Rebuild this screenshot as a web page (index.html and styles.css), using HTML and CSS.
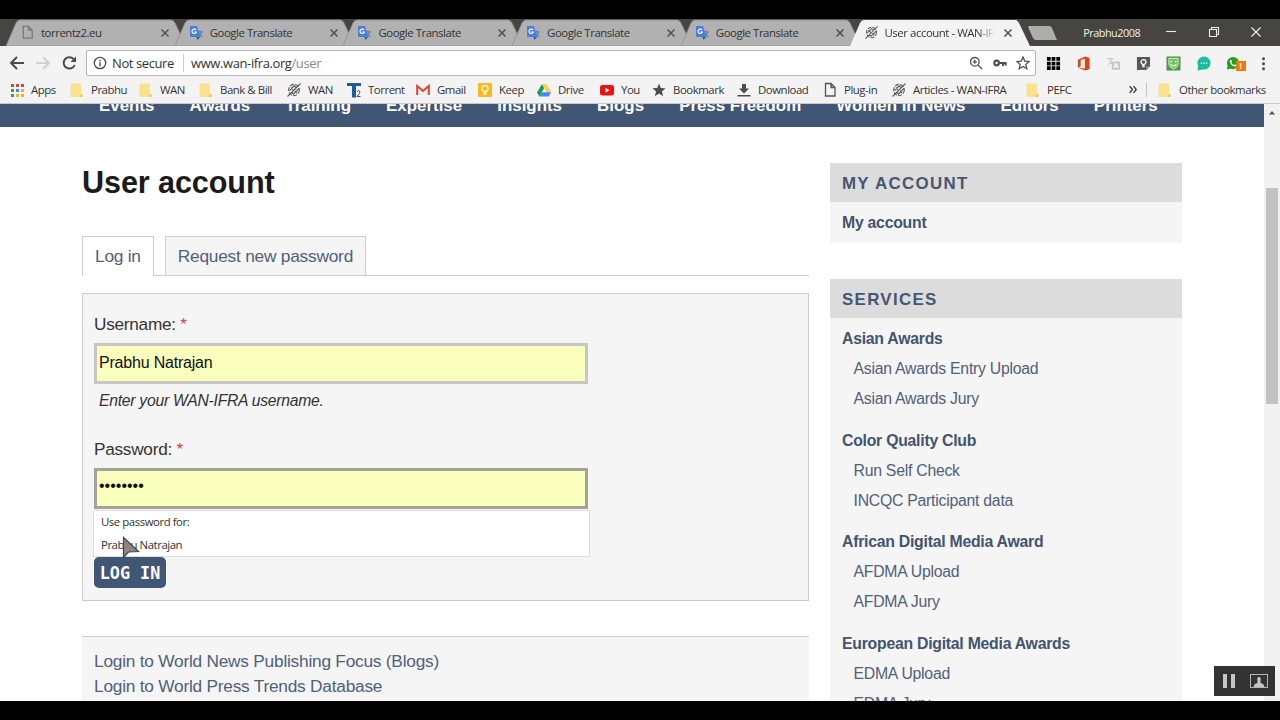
FILE: index.html
```html
<!DOCTYPE html>
<html lang="en">
<head>
  <meta charset="UTF-8" />
  <meta name="viewport" content="width=device-width, initial-scale=1.0"/>
  <title>User account - WAN-IFRA</title>
  <link rel="stylesheet" href="styles.css">
</head>
<body>
  <!-- shared icons -->
  <svg class="defs">
    <symbol id="tab-shape" viewBox="0 0 180 27"><path d="M0 27 L10 4 Q11.5 1 14 1 H165 Q167.500 1 169 4 L180 27 Z"/></symbol>
    <symbol id="i-doc" viewBox="0 0 14 16"><path d="M2.500 1.500 H8 L12 5.500 V14 H2.500 Z M8 1.500 V5.500 H12" fill="none" stroke="currentColor" stroke-width="1.300"/></symbol>
    <symbol id="i-folder" viewBox="0 0 14 16"><path d="M0.500 1.500 H11 V12 L12.500 13 V15 H0.500 Z" fill="#f9e28b"/><path d="M11 12 L12.500 12 V15 H9.500 Z" fill="#e9c95c"/></symbol>
    <symbol id="i-wan" viewBox="0 0 14 16"><g fill="none" stroke="#5a5a5a" stroke-width="1.100"><ellipse cx="7" cy="8" rx="5.300" ry="5.600" stroke-dasharray="4 1.200"/><path d="M.5 14.500 L13.500 1.500 M2.500 8.500 L7.500 3.500 M6 12.500 L12 6.500 M4 5.500 L6 8 M8 9 L10 11 M7.500 4 L9 5.500 M4.500 10 L6.500 12"/></g></symbol>
    <symbol id="i-translate" viewBox="0 0 15 15"><path d="M6 4 H14 V13 L12 14 H8 Z" fill="#a7abb0"/><path d="M8.500 7 H13.500 M11 6 V7 M9 12 L12.500 7.500 M10 8.500 L13 12" stroke="#5c6c86" fill="none"/><path d="M1 1 H8 L11 12 H2 Q1 12 1 11 Z" fill="#4a7de0"/><path d="M7.500 12 H11 L8.500 15 Z" fill="#2d55b5"/><path d="M7 5 A2.200 2.200 0 1 0 7.300 7 H5.300" fill="none" stroke="#fff" stroke-width="1.100"/></symbol>
    <symbol id="i-x" viewBox="0 0 10 10"><path d="M1.500 1.500 L8.500 8.500 M8.500 1.500 L1.500 8.500" fill="none" stroke="currentColor" stroke-width="1.500"/></symbol>
  </svg>

  <div class="window">
    <header class="tabstrip">
      <div class="tab"><svg class="shape"><use href="#tab-shape"/></svg><svg class="fav grey"><use href="#i-doc"/></svg><span>torrentz2.eu</span><svg class="close"><use href="#i-x"/></svg></div>
      <div class="tab"><svg class="shape"><use href="#tab-shape"/></svg><svg class="fav"><use href="#i-translate"/></svg><span>Google Translate</span><svg class="close"><use href="#i-x"/></svg></div>
      <div class="tab"><svg class="shape"><use href="#tab-shape"/></svg><svg class="fav"><use href="#i-translate"/></svg><span>Google Translate</span><svg class="close"><use href="#i-x"/></svg></div>
      <div class="tab"><svg class="shape"><use href="#tab-shape"/></svg><svg class="fav"><use href="#i-translate"/></svg><span>Google Translate</span><svg class="close"><use href="#i-x"/></svg></div>
      <div class="tab"><svg class="shape"><use href="#tab-shape"/></svg><svg class="fav"><use href="#i-translate"/></svg><span>Google Translate</span><svg class="close"><use href="#i-x"/></svg></div>
      <div class="tab active"><svg class="shape"><use href="#tab-shape"/></svg><svg class="fav"><use href="#i-wan"/></svg><span>User account - WAN-IFRA</span><svg class="close"><use href="#i-x"/></svg></div>
      <svg class="new-tab" viewBox="0 0 31 16"><path d="M2 1 H22 Q24 1 25 3 L30 15 H9 Q7 15 6 13 L1 2 Z" fill="#adadab"/></svg>
      <span class="profile">Prabhu2008</span>
      <div class="win-buttons">
        <svg viewBox="0 0 12 12"><path d="M1 5.500 H11"/></svg>
        <svg viewBox="0 0 12 12"><path d="M1.500 3.500 H8.500 V10.500 H1.500 Z M3.500 3.500 V1.500 H10.500 V8.500 H8.500"/></svg>
        <svg viewBox="0 0 12 12"><path d="M1.500 1.500 L10.500 10.500 M10.500 1.500 L1.500 10.500"/></svg>
      </div>
    </header>

    <div class="toolbar">
      <div class="nav-buttons">
        <svg viewBox="0 0 16 16"><path d="M15 8 H2.500 M8 2 L2 8 L8 14"/></svg>
        <svg class="off" viewBox="0 0 16 16"><path d="M1 8 H13.500 M8 2 L14 8 L8 14"/></svg>
        <svg viewBox="0 0 16 16"><path d="M13.700 10 A5.700 5.700 0 1 1 13 4.500"/><path d="M15 1.500 V7 H9.500 Z" fill="#4a4a4a" stroke="none"/></svg>
      </div>
      <div class="address">
        <svg class="info" viewBox="0 0 14 14"><circle cx="7" cy="7" r="5.700" fill="none" stroke="#4a4a4a" stroke-width="1.300"/><path d="M6.300 6.200 H7.700 V10.200 H6.300 Z M6.300 3.800 H7.700 V5.200 H6.300 Z" fill="#4a4a4a"/></svg>
        <span class="secure">Not secure</span>
        <span class="url">www.wan-ifra.org<i>/user</i></span>
        <div class="actions">
          <svg viewBox="0 0 14 14"><circle cx="5.800" cy="5.800" r="4.300"/><path d="M9 9 L13 13 M3.800 5.800 H7.800 M5.800 3.800 V7.800"/></svg>
          <svg viewBox="0 0 14 14"><circle cx="3.600" cy="7" r="2.300" stroke-width="2.200"/><path d="M6 7 H13.500 M10 7 V10 M12.700 7 V9.500" stroke-width="2"/></svg>
          <svg viewBox="0 0 14 14"><path d="M7 1 L8.700 5.100 L13.100 5.500 L9.800 8.400 L10.800 12.700 L7 10.400 L3.200 12.700 L4.200 8.400 L.9 5.500 L5.300 5.100 Z"/></svg>
        </div>
      </div>
      <div class="extensions">
        <svg viewBox="0 0 16 16"><path d="M1 1h4v4H1z M6 1h4v4H6z M11 1h4v4h-4z M1 6h4v4H1z M6 6h4v4H6z M11 6h4v4h-4z M1 11h4v4H1z M6 11h4v4H6z M11 11h4v4h-4z"/></svg>
        <svg viewBox="0 0 16 16"><path d="M2 4 L10 .5 L14.500 2 V14 L10 15.500 L2 12.500 L9.500 13.300 V3 L5 4.300 V11 L2 12.500 Z" fill="#df4415"/></svg>
        <svg viewBox="0 0 16 16" fill="none" stroke="#bdbdbd"><path d="M1 3 H8 M4.500 2 V3 M2 9.500 Q6 7.500 6.500 3 M3 5 Q4.500 8 8 9"/><path d="M7 6.500 H14.500 V14 H6.500 Z" fill="#d2d2d2"/><path d="M8.500 12.500 L10.800 8 L13 12.500 M9.500 11 H12" stroke="#fff"/></svg>
        <svg viewBox="0 0 16 16"><path d="M1 1 H15 V11 L11 15 H1 Z" fill="#58595b"/><path d="M11 15 V11 H15 Z" fill="#9a9a9a"/><circle cx="8" cy="6.500" r="2.600" fill="none" stroke="#fff" stroke-width="1.300"/><path d="M6.800 9.500 H9.200 V12 H6.800 Z" fill="#fff"/></svg>
        <svg viewBox="0 0 16 16"><rect x=".5" y=".5" width="15" height="15" fill="#4c9b40"/><path d="M3 2.500 H13 V9 Q12.500 12 8 14 Q3.500 12 3 9 Z" fill="#78bd69" stroke="#d9efd4"/><path d="M5.500 5 V7 M10.500 5 V7 M5 9 Q8 12 11 9" fill="none" stroke="#fff" stroke-width="1.200"/></svg>
        <svg viewBox="0 0 16 16"><circle cx="8.500" cy="7.500" r="7" fill="#1abc9c"/><path d="M2.500 9 L1.500 15.500 L8 14 Z" fill="#1abc9c"/><path d="M5 7 h1.500v1.300H5z M7.800 7 h1.500v1.300H7.800z M10.600 7 h1.500v1.300h-1.500z" fill="#fff"/></svg>
        <div class="whatsapp">
          <svg viewBox="0 0 16 16"><circle cx="7.500" cy="7.500" r="6.500" fill="#1fa21b"/><path d="M1.500 10 L1 14.500 L6 13 Z" fill="#1fa21b"/><path d="M4 4.500 Q5 3.500 5.800 4.500 L6.300 6 L5.800 7 Q6.500 8.800 8.500 9.500 L9.500 8.800 L11.300 9.700 Q11 11.500 9 11.300 Q4.500 10 4 4.500 Z" fill="#fff"/></svg>
          <b>!</b>
        </div>
        <svg viewBox="0 0 16 16" fill="#4a4a4a"><circle cx="8" cy="3" r="1.600"/><circle cx="8" cy="8.300" r="1.600"/><circle cx="8" cy="13.600" r="1.600"/></svg>
      </div>
    </div>

    <nav class="bookmarks">
      <a><svg viewBox="0 0 14 16"><path d="M1 2h3v3H1z M6 2h3v3H6z" fill="#d94438"/><path d="M11 2h3v3h-3z" fill="#d94438"/><path d="M1 7h3v3H1z" fill="#3a9c50"/><path d="M6 7h3v3H6z" fill="#4184f3"/><path d="M11 7h3v3h-3z" fill="#e9b424"/><path d="M1 12h3v3H1z" fill="#3a9c50"/><path d="M6 12h3v3H6z M11 12h3v3h-3z" fill="#e9b424"/></svg>Apps</a>
      <a><svg><use href="#i-folder"/></svg>Prabhu</a>
      <a><svg><use href="#i-folder"/></svg>WAN</a>
      <a><svg><use href="#i-folder"/></svg>Bank &amp; Bill</a>
      <a><svg><use href="#i-wan"/></svg>WAN</a>
      <a><svg viewBox="0 0 14 16"><path d="M0 1 H14 V4 H9 V15.500 H5 V4 H0 Z" fill="#1f5c96"/><path d="M10 9.500 Q12 7.500 13 9.500 Q13.300 11 10 14.500 H13.500" fill="none" stroke="#44525f"/></svg>Torrent</a>
      <a><svg viewBox="0 0 14 16"><rect x="1" y="3" width="12" height="10" fill="#f3eeee"/><path d="M1.200 13 V4 L7 9 L12.800 4 V13" fill="none" stroke="#d5463b" stroke-width="2"/></svg>Gmail</a>
      <a><svg viewBox="0 0 14 16"><rect x="0" y="1" width="14" height="14" rx="1" fill="#f8b91b"/><circle cx="7" cy="6.500" r="3" fill="none" stroke="#fff3cd" stroke-width="1.500"/><path d="M5.500 10 H8.500 V13 H5.500 Z" fill="#fff3cd"/></svg>Keep</a>
      <a><svg viewBox="0 0 14 16"><path d="M5 2 L0 10.500 L2.300 14.500 L7.200 6 Z" fill="#149d5b"/><path d="M5 2 H9.500 L14 10 H9.600 Z" fill="#fdcd45"/><path d="M4.700 10.300 H14 L11.700 14.500 H2.300 Z" fill="#4687f2"/></svg>Drive</a>
      <a><svg viewBox="0 0 14 16"><rect x="0" y="3" width="14" height="10.500" rx="2.500" fill="#ee1212"/><path d="M5.500 5.800 L9.500 8.200 L5.500 10.700 Z" fill="#fff"/></svg>You</a>
      <a><svg viewBox="0 0 14 16"><path d="M7 1.500 L8.800 6 L13.600 6.300 L9.900 9.400 L11.200 14.200 L7 11.500 L2.800 14.200 L4.100 9.400 L.4 6.300 L5.200 6 Z" fill="#4c4c4c"/></svg>Bookmark</a>
      <a><svg viewBox="0 0 14 16"><path d="M5 2 H9 V6.500 H12 L7 11.500 L2 6.500 H5 Z M.5 13 H13.500 V14.500 H.5 Z" fill="#4c4c4c"/></svg>Download</a>
      <a><svg><use href="#i-doc"/></svg>Plug-in</a>
      <a><svg><use href="#i-wan"/></svg>Articles - WAN-IFRA</a>
      <a><svg><use href="#i-folder"/></svg>PEFC</a>
      <a class="more"><svg viewBox="0 0 10 10"><path d="M1.500 2 L4 5 L1.500 8 M5 2 L7.500 5 L5 8"/></svg></a>
      <a><svg><use href="#i-folder"/></svg>Other bookmarks</a>
    </nav>

    <div class="viewport">
      <div class="page">
        <nav class="site-nav">
          <a>Events</a><a>Awards</a><a>Training</a><a>Expertise</a><a>Insights</a><a>Blogs</a><a>Press Freedom</a><a>Women in News</a><a>Editors</a><a>Printers</a>
        </nav>

        <div class="columns">
          <main>
            <h1>User account</h1>
            <ul class="page-tabs">
              <li class="active">Log in</li>
              <li>Request new password</li>
            </ul>

            <form class="login-form">
              <label for="name">Username: <em>*</em></label>
              <input type="text" id="name" value="Prabhu Natrajan">
              <p class="description">Enter your WAN-IFRA username.</p>
              <label for="pass" class="pass-label">Password: <em>*</em></label>
              <div class="pass-field">
                <input type="password" class="focused" id="pass" value="password">
                <div class="autofill">
                  <div>Use password for:</div>
                  <div>Prabhu Natrajan</div>
                  <svg class="cursor" viewBox="0 0 18 24"><path d="M1.500 1.500 V21.500 L6.500 16 L16.500 15.500 Z" fill="#8b8684" stroke="#4a4646" stroke-width="1.200"/></svg>
                </div>
              </div>
              <button type="button">LOG IN</button>
            </form>

            <div class="login-links">
              <a>Login to World News Publishing Focus (Blogs)</a>
              <a>Login to World Press Trends Database</a>
            </div>
          </main>

          <aside>
            <section>
              <h2>MY ACCOUNT</h2>
              <ul>
                <li class="title">My account</li>
              </ul>
            </section>
            <section>
              <h2>SERVICES</h2>
              <ul>
                <li class="title">Asian Awards</li>
                <li>Asian Awards Entry Upload</li>
                <li>Asian Awards Jury</li>
                <li class="title">Color Quality Club</li>
                <li>Run Self Check</li>
                <li>INCQC Participant data</li>
                <li class="title">African Digital Media Award</li>
                <li>AFDMA Upload</li>
                <li>AFDMA Jury</li>
                <li class="title">European Digital Media Awards</li>
                <li>EDMA Upload</li>
                <li>EDMA Jury</li>
              </ul>
            </section>
          </aside>
        </div>
      </div>

      <div class="scrollbar">
        <svg viewBox="0 0 16 16"><path d="M5 10.500 L8 7 L11 10.500 Z" fill="#505050"/></svg>
        <div class="thumb"></div>
      </div>
    </div>

    <div class="recorder">
      <svg class="pause" viewBox="0 0 14 14"><path d="M1 0 H5 V14 H1 Z M9 0 H13 V14 H9 Z" fill="#c6c6c6"/></svg>
      <svg class="cam" viewBox="0 0 18 14"><rect x=".5" y=".5" width="17" height="13" fill="none" stroke="#b5b5b5"/><path d="M3.500 13 Q4 9.500 7.500 9 V7 Q6.500 3 9 3 Q11.500 3 10.500 7 V9 Q14 9.500 14.500 13 Z" fill="#c6c6c6"/></svg>
    </div>
  </div>
</body>
</html>
```

FILE: styles.css
```css
* { box-sizing: border-box; }
body {
  margin: 0;
  height: 720px;
  padding-top: 19px;
  background: #000;
  overflow: hidden;
  font-family: "Liberation Sans", Arial, sans-serif;
}
ul { list-style: none; margin: 0; padding: 0; }
svg { display: block; flex: none; }
.defs { position: absolute; width: 0; height: 0; }

.window {
  position: relative;
  display: flex;
  flex-direction: column;
  width: 1280px;
  height: 682px;
  overflow: hidden;
  background: #fff;
}

/* browser chrome */
.tabstrip, .toolbar, .bookmarks, .autofill {
  font-family: "Open Sans", "Noto Sans", sans-serif;
  font-size: 11.4px;
  letter-spacing: -0.45px;
  color: #333;
  white-space: nowrap;
}
.tabstrip {
  display: flex;
  align-items: center;
  height: 27px;
  padding-left: 6px;
  background: #464542;
}
.tab {
  position: relative;
  display: flex;
  align-items: center;
  width: 180px;
  height: 27px;
  margin-right: -11.3px;
  padding-left: 14px;
  flex: none;
}
.tab .shape {
  position: absolute;
  left: 0;
  top: 0;
  width: 180px;
  height: 27px;
  fill: #b1b1b1;
  stroke: #8e8e8e;
  stroke-width: 0.8;
}
.tab.active .shape { fill: #f3f3f3; stroke: none; }
.tab .fav { position: relative; width: 15px; height: 15px; margin-right: 6px; color: #777; }
.tab span { position: relative; width: 116px; overflow: hidden; }
.tab.active span {
  -webkit-mask-image: linear-gradient(to right, #000 80%, transparent 95%);
  mask-image: linear-gradient(to right, #000 80%, transparent 95%);
}
.tab .close { position: relative; width: 10px; height: 10px; margin-left: 3px; color: #505050; }
.tab.active .close { margin-left: 2px; }
.new-tab { width: 31px; height: 16px; margin-left: 9px; }
.profile { width: 58px; margin-left: 25px; padding-bottom: 1px; font-size: 10.8px; color: #f0f0f0; }
.win-buttons { display: flex; gap: 30.5px; margin: -2px 0 0 24px; }
.win-buttons svg { width: 12px; height: 12px; fill: none; stroke: #eee; stroke-width: 1.1; }

.toolbar {
  display: flex;
  align-items: center;
  height: 34px;
  padding-left: 9px;
  background: #f3f3f3;
  font-size: 13px;
  letter-spacing: -0.4px;
}
.nav-buttons { display: flex; gap: 10px; width: 77px; }
.nav-buttons svg { width: 16px; height: 16px; fill: none; stroke: #4a4a4a; stroke-width: 2; }
.nav-buttons .off { stroke: #d0d0d0; }
.address {
  display: flex;
  align-items: center;
  width: 950px;
  height: 26px;
  padding: 0 5px 0 6px;
  border: 1px solid #b5b5b5;
  border-radius: 2px;
  background: #fff;
}
.info { width: 14px; height: 14px; margin-right: 5px; }
.secure { width: 72px; border-right: 1px solid #ccc; color: #333; }
.url { margin-left: 7px; color: #333; }
.url i { font-style: normal; color: #888; }
.actions { display: flex; gap: 9.5px; margin-left: auto; }
.actions svg { width: 14px; height: 14px; fill: none; stroke: #505050; stroke-width: 1.3; }
.extensions { display: grid; grid-template-columns: repeat(8, 30px); justify-items: center; margin-left: 2px; }
.extensions svg { width: 15px; height: 15px; }
.whatsapp { position: relative; }
.whatsapp b {
  position: absolute;
  left: 10px;
  top: 5px;
  width: 10px;
  height: 10px;
  background: #f5780f;
  color: #fff;
  font-size: 8px;
  line-height: 10px;
  text-align: center;
}

.bookmarks {
  display: grid;
  grid-template-columns: 60px 69px 60px 88px 60px 69px 62px 59px 63px 52px 85px 86px 69px 134px 102px 30px auto;
  align-items: center;
  height: 24px;
  padding: 0 0 4px 10px;
  background: #f3f3f3;
  border-bottom: 1px solid #c8c8c8;
}
.bookmarks a { display: flex; align-items: center; }
.bookmarks svg { width: 14px; height: 16px; margin-right: 7px; color: #555; }
.bookmarks .more { border-right: 1px solid #c4c4c4; width: 19px; height: 14px; }
.bookmarks .more svg { width: 11px; height: 11px; fill: none; stroke: #333; stroke-width: 1.2; }

/* page */
.viewport { display: flex; flex: 1; min-height: 0; }
.page { width: 1264px; overflow: hidden; }
.site-nav {
  display: flex;
  gap: 35.1px;
  height: 23px;
  padding-left: 99px;
  background: #405674;
  color: #fff;
  font-size: 16.9px;
  font-weight: bold;
  line-height: 4px;
  white-space: nowrap;
}
.columns { display: flex; gap: 21px; padding-left: 82px; }
main { width: 727px; }
h1 {
  margin: 35px 0 34px;
  font-size: 30.6px;
  letter-spacing: -0.1px;
  line-height: 40px;
  color: #1b1b1b;
}
.page-tabs { display: flex; gap: 11px; height: 40px; border-bottom: 1px solid #ccc; letter-spacing: -0.25px; }
.page-tabs li {
  height: 39px;
  padding: 0 12px;
  border: 1px solid #ccc;
  border-bottom: 0;
  background: #f5f5f5;
  color: #51607a;
  font-size: 17.35px;
  line-height: 39px;
}
.page-tabs .active { height: 40px; background: #fff; }
.login-form {
  display: flex;
  flex-direction: column;
  align-items: flex-start;
  height: 308px;
  margin-top: 17px;
  padding: 20px 11px 0;
  border: 1px solid #ccc;
  background: #f5f5f5;
  color: #333;
}
label { font-size: 17.2px; letter-spacing: -0.25px; line-height: 20px; }
label em { color: #e03a44; font-style: normal; }
input {
  display: block;
  width: 494px;
  height: 41px;
  margin-top: 9px;
  padding: 0 3px 2px 2px;
  border: 3px solid #c6c6c6;
  background: #faffbd;
  color: #111;
  font: 16px "Liberation Sans", Arial, sans-serif;
  letter-spacing: -0.2px;
  outline: none;
}
input.focused { padding-bottom: 5px; border-color: #a3a398; letter-spacing: 0; }
.description { margin: 8px 0 0 5px; font-size: 15.7px; font-style: italic; letter-spacing: -0.25px; line-height: 18px; }
.pass-label { margin-top: 29px; }
.autofill {
  position: relative;
  width: 497px;
  height: 47px;
  margin: 1px 0 0 -1px;
  padding-left: 7px;
  border: 1px solid #ddd;
  background: #fff;
  line-height: 22.5px;
}
.cursor { position: absolute; left: 28px; top: 25px; width: 18px; height: 24px; }
button {
  width: 72px;
  height: 31px;
  padding: 0;
  border: 0;
  border-radius: 5px;
  background: #405674;
  color: #fff;
  font: bold 16.8px "DejaVu Sans Mono", monospace;
}
.login-links {
  display: flex;
  flex-direction: column;
  margin-top: 35px;
  padding: 12px 12px 20px;
  border-top: 1px solid #ccc;
  background: #f5f5f5;
  color: #51607a;
  font-size: 17.3px;
  letter-spacing: -0.23px;
  line-height: 25.3px;
}

aside { width: 352px; padding-top: 36px; color: #51607a; }
section { margin-bottom: 36px; background: #f5f5f5; }
h2 {
  margin: 0;
  height: 39px;
  padding-left: 12px;
  background: #dcdcdc;
  color: #475670;
  font-size: 16.9px;
  letter-spacing: 1.3px;
  line-height: 41px;
}
aside ul { padding: 6px 12px 5px; }
aside li { padding-left: 11.5px; font-size: 15.8px; letter-spacing: -0.25px; line-height: 30px; }
aside .title { padding-left: 0; color: #43546e; font-weight: bold; }
aside li + .title { margin-top: 11.7px; }

.scrollbar { width: 16px; background: #f1f1f1; }
.scrollbar svg { width: 16px; height: 16px; }
.thumb { width: 12px; height: 216px; margin: 68px 0 0 2px; background: #c1c1c1; }

/* screen recorder controls */
.recorder {
  position: absolute;
  right: 5px;
  bottom: 5px;
  display: flex;
  align-items: center;
  gap: 14px;
  width: 61px;
  height: 30px;
  padding-left: 8px;
  background: #333;
}
.pause { width: 14px; height: 14px; }
.cam { width: 18px; height: 14px; }
```
